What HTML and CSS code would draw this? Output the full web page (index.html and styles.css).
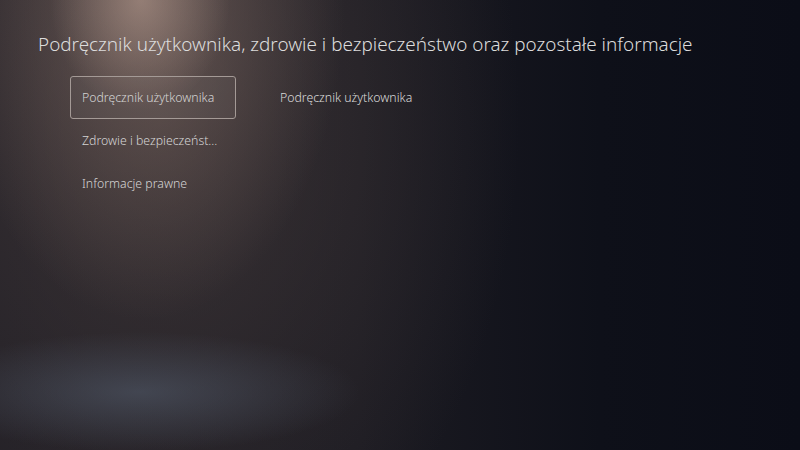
FILE: index.html
```html
<!DOCTYPE html>
<html lang="pl">
<head>
<meta charset="utf-8">
<title>Podręcznik użytkownika</title>
<link rel="stylesheet" href="styles.css">
</head>
<body>
<div class="screen">
	<h1 class="title">Podręcznik użytkownika, zdrowie i bezpieczeństwo oraz pozostałe informacje</h1>

	<div class="content">
		<ul class="menu">
			<li class="item selected">Podręcznik użytkownika</li>
			<li class="item">Zdrowie i bezpieczeńst...</li>
			<li class="item">Informacje prawne</li>
		</ul>
		<div class="detail">Podręcznik użytkownika</div>
	</div>
</div>
</body>
</html>
```
FILE: styles.css
```css
body {
	margin: 0;
	background: #0d0f18;
	font-family: "Noto Sans", "Open Sans", sans-serif;
}

.screen {
	width: 800px;
	height: 450px;
	overflow: hidden;
	background:
		radial-gradient(ellipse 90px 110px at 140px 0, rgba(205, 175, 160, 0.45), rgba(205, 175, 160, 0) 100%),
		radial-gradient(ellipse 200px 320px at 145px 0, rgba(150, 125, 115, 0.5), rgba(150, 125, 115, 0) 100%),
		radial-gradient(ellipse 220px 60px at 140px 392px, rgba(85, 95, 112, 0.55), rgba(85, 95, 112, 0) 100%),
		radial-gradient(ellipse 360px 520px at 160px 120px, rgba(70, 60, 60, 0.7), rgba(70, 60, 60, 0) 100%),
		linear-gradient(to right, #201e25 0%, #1c1b22 45%, #0e1019 75%, #0b0d17 100%);
	color: #d6d6d6;
}

.title {
	margin: 0;
	padding: 31px 0 0 38px;
	font-size: 18.9px;
	font-weight: 300;
	color: #dcdcdc;
	white-space: nowrap;
}

.content {
	display: flex;
	padding: 19px 0 0 70px;
}

.menu {
	list-style: none;
	margin: 0;
	padding: 0;
	width: 166px;
}

.item {
	height: 43px;
	box-sizing: border-box;
	padding: 0 11px;
	display: flex;
	align-items: center;
	font-size: 12.3px;
	font-weight: 300;
	color: #d4d4d4;
	white-space: nowrap;
	border: 1.5px solid transparent;
	border-radius: 3px;
}

.item.selected {
	border-color: #a49a96;
	background: rgba(255, 255, 255, 0.04);
}

.detail {
	margin-left: 44px;
	height: 43px;
	display: flex;
	align-items: center;
	font-size: 12.3px;
	font-weight: 300;
	color: #dadada;
	white-space: nowrap;
}
```
